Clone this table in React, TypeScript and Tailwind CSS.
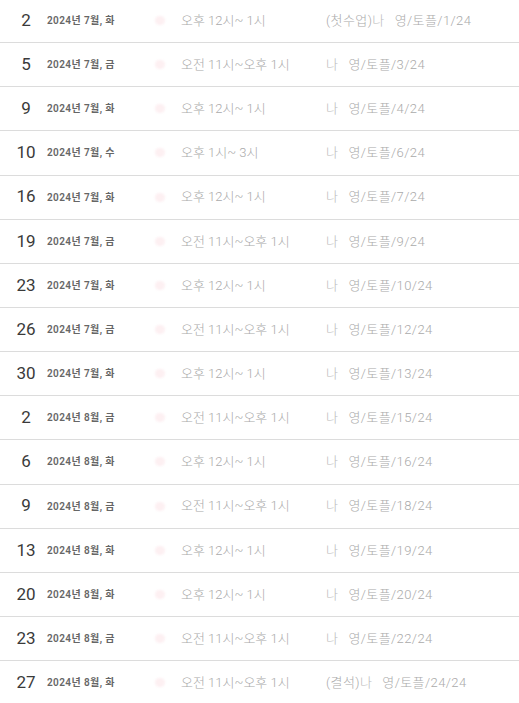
const rows = [
  { day: 2, month: 7, dow: "화", time: "오후 12시~ 1시", pre: "(첫수업)", n: "1/24" },
  { day: 5, month: 7, dow: "금", time: "오전 11시~오후 1시", pre: "", n: "3/24" },
  { day: 9, month: 7, dow: "화", time: "오후 12시~ 1시", pre: "", n: "4/24" },
  { day: 10, month: 7, dow: "수", time: "오후 1시~ 3시", pre: "", n: "6/24" },
  { day: 16, month: 7, dow: "화", time: "오후 12시~ 1시", pre: "", n: "7/24" },
  { day: 19, month: 7, dow: "금", time: "오전 11시~오후 1시", pre: "", n: "9/24" },
  { day: 23, month: 7, dow: "화", time: "오후 12시~ 1시", pre: "", n: "10/24" },
  { day: 26, month: 7, dow: "금", time: "오전 11시~오후 1시", pre: "", n: "12/24" },
  { day: 30, month: 7, dow: "화", time: "오후 12시~ 1시", pre: "", n: "13/24" },
  { day: 2, month: 8, dow: "금", time: "오전 11시~오후 1시", pre: "", n: "15/24" },
  { day: 6, month: 8, dow: "화", time: "오후 12시~ 1시", pre: "", n: "16/24" },
  { day: 9, month: 8, dow: "금", time: "오전 11시~오후 1시", pre: "", n: "18/24" },
  { day: 13, month: 8, dow: "화", time: "오후 12시~ 1시", pre: "", n: "19/24" },
  { day: 20, month: 8, dow: "화", time: "오후 12시~ 1시", pre: "", n: "20/24" },
  { day: 23, month: 8, dow: "금", time: "오전 11시~오후 1시", pre: "", n: "22/24" },
  { day: 27, month: 8, dow: "화", time: "오전 11시~오후 1시", pre: "(결석)", n: "24/24" },
];

export default function App() {
  return (
    <div
      className="w-[519px] h-[703px] overflow-hidden bg-white"
      style={{ fontFamily: "Roboto, 'Noto Sans CJK KR', sans-serif" }}
    >
      <div className="-mt-[1px]">
        {rows.map((r, i) => (
          <div
            key={i}
            className="flex items-center h-[44.15px] border-b border-[#dcdcdc]"
          >
            <span className="ml-[12px] w-[28px] text-center text-[17px] text-[#3a3a3a]">
              {r.day}
            </span>
            <span className="ml-[7px] w-[108px] text-[10px] font-semibold text-[#666] tracking-[0.4px]">
              2024년 {r.month}월, {r.dow}
            </span>
            <span className="w-[10px] h-[9px] rounded-full bg-[#fdf0f2] blur-[1px]" />
            <span className="ml-[16px] w-[145px] text-[13px] text-[#aaa] font-light">
              {r.time}
            </span>
            <span className="text-[13px] text-[#aaa] font-light flex items-center tracking-[0.4px]">
              {r.pre}
              <span className="text-[#bbb]">나</span>
              <span className="inline-block w-[10px]" />
              영/토플/{r.n}
            </span>
          </div>
        ))}
      </div>
    </div>
  );
}
